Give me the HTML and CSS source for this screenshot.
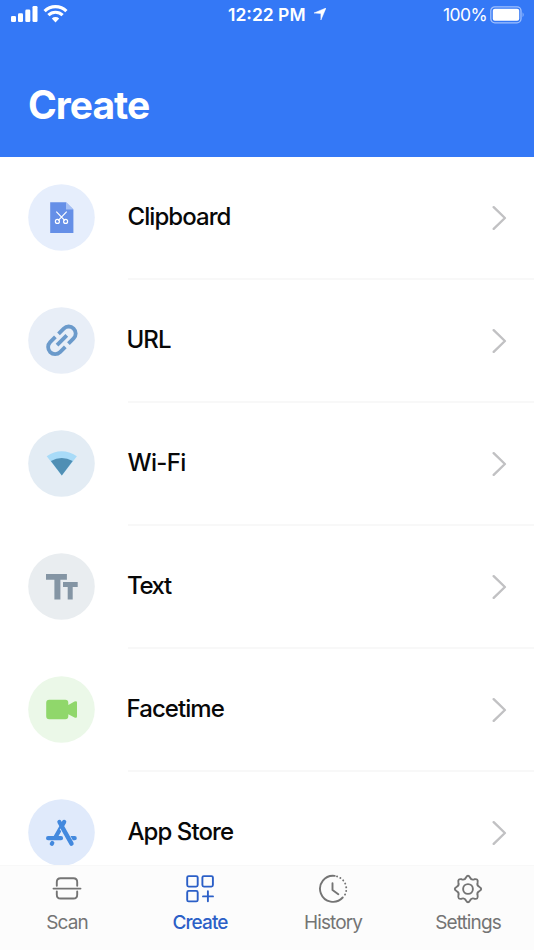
FILE: index.html
```html
<!DOCTYPE html>
<html lang="en">
<head>
<meta charset="utf-8">
<title>Create</title>
<link rel="stylesheet" href="styles.css">
</head>
<body>
<div class="app">
  <header class="header">
    <div class="status">
      <div class="status-left">
        <svg width="58" height="18" viewBox="0 0 58 18" fill="#fff">
          <rect x="0" y="11" width="5" height="6" rx="1.3"/><rect x="7" y="8.2" width="5" height="8.8" rx="1.3"/><rect x="14.3" y="4.6" width="5" height="12.4" rx="1.3"/><rect x="21.5" y="1" width="5" height="16" rx="1.3"/>
          <g fill="none" stroke="#fff" stroke-width="3.1"><path d="M33.6 6.2a15.2 15.2 0 0 1 21.8 0"/><path d="M37.4 10.2a10 10 0 0 1 14.2 0"/></g>
          <path d="M40.8 13.5a5.4 5.4 0 0 1 7.4 0L44.5 17.4z"/>
        </svg>
      </div>
      <div class="status-time">12:22 PM<svg width="12" height="12" viewBox="0 0 12 12"><path d="M12 0 6.9 12V5.5L0 5z" fill="#fff" stroke="#fff" stroke-width=".5"/></svg></div>
      <div class="status-right">100%<svg width="35" height="18" viewBox="0 0 35 18"><rect x=".8" y=".8" width="30.2" height="16" rx="4" fill="none" stroke="#a0c0fd" stroke-width="1.3"/><rect x="2.8" y="2.8" width="26.4" height="12" rx="2" fill="#fff"/><path d="M32.6 6.3q2 2.5 0 5z" fill="#a0c0fd"/></svg></div>
    </div>
    <h1 class="title">Create</h1>
  </header>

  <main class="list">
    <div class="row">
      <svg class="icon" viewBox="0 0 67 67"><circle cx="33.5" cy="33.5" r="33.3" fill="#e6eefc"/><path d="M22.2 18.2H38l7.4 7.4V49H22.2z" fill="#658fe7"/><path d="M38 18.2l7.4 7.4H38z" fill="#a5c0f5"/><g fill="none" stroke="#fff" stroke-width="1.2"><path d="M28.3 27.7l8.6 9M38.7 27.7l-8.6 9"/><circle cx="29.4" cy="37.4" r="2"/><circle cx="37.6" cy="37.4" r="2"/></g></svg>
      <div class="cell"><span class="label clip">Clipboard</span><svg class="chevron" viewBox="0 0 14 24"><path d="M1.2 1.2 12.4 12 1.2 22.8"/></svg></div>
    </div>
    <div class="row">
      <svg class="icon" viewBox="0 0 67 67"><circle cx="33.5" cy="33.5" r="33.3" fill="#e8eef7"/><g transform="translate(33.9 33.3) rotate(-45)" fill="none" stroke="#6b9acb" stroke-width="3.8"><path d="M-2.2-7H-9.6a7 7 0 0 0 0 14H-2.2M2.2-7H9.6a7 7 0 0 1 0 14H2.2M-6.9 0H6.9"/></g></svg>
      <div class="cell"><span class="label url">URL</span><svg class="chevron" viewBox="0 0 14 24"><path d="M1.2 1.2 12.4 12 1.2 22.8"/></svg></div>
    </div>
    <div class="row">
      <svg class="icon" viewBox="0 0 67 67"><circle cx="33.5" cy="33.5" r="33.3" fill="#e3ecf4"/><path d="M18.7 26.2q14.8-10 30.2 0L33.8 45.4z" fill="#a8dbf8"/><path d="M22.9 31.1q10.8-6 21.8 0L33.8 45.4z" fill="#508fb4"/></svg>
      <div class="cell"><span class="label wifi">Wi-Fi</span><svg class="chevron" viewBox="0 0 14 24"><path d="M1.2 1.2 12.4 12 1.2 22.8"/></svg></div>
    </div>
    <div class="row">
      <svg class="icon" viewBox="0 0 67 67"><circle cx="33.5" cy="33.5" r="33.3" fill="#e9edf0"/><path d="M18 21h20.9v5.7h-6.5v19.8h-6V26.7H18zM35 29.1h14.7v5h-5v12.4h-5V34.1H35z" fill="#8495a4"/></svg>
      <div class="cell"><span class="label text">Text</span><svg class="chevron" viewBox="0 0 14 24"><path d="M1.2 1.2 12.4 12 1.2 22.8"/></svg></div>
    </div>
    <div class="row">
      <svg class="icon" viewBox="0 0 67 67"><circle cx="33.5" cy="33.5" r="33.3" fill="#ebf8e8"/><path d="M21.2 23.7H37.3q3 0 3 3v2.2L46.5 25.6q2.5-1.2 2.5 1V40.5q0 2-2.5.9L40.3 38.3v2q0 3-3 3H21.2q-3 0-3-3V26.7q0-3 3-3z" fill="#90d76b"/></svg>
      <div class="cell"><span class="label face">Facetime</span><svg class="chevron" viewBox="0 0 14 24"><path d="M1.2 1.2 12.4 12 1.2 22.8"/></svg></div>
    </div>
    <div class="row">
      <svg class="icon" viewBox="0 0 67 67"><circle cx="33.5" cy="33.5" r="33.3" fill="#e0eafb"/><g fill="none" stroke="#4389de" stroke-width="4.2" stroke-linecap="round"><path d="M31.4 22.9 33.8 27.3M36.2 22.9 27.3 38.5M24.3 44l-.5.8"/><path d="M20.1 39.2H33M42.5 39.2h4.2"/></g><path d="M34.4 28.5 43.3 44.6" fill="none" stroke="#e0eafb" stroke-width="6"/><path d="M33.8 27.3 43.5 44.6" fill="none" stroke="#4389de" stroke-width="4.4" stroke-linecap="round"/></svg>
      <div class="cell"><span class="label app-store">App Store</span><svg class="chevron" viewBox="0 0 14 24"><path d="M1.2 1.2 12.4 12 1.2 22.8"/></svg></div>
    </div>
  </main>

  <nav class="tabs">
    <div class="tab"><svg width="30" height="30" viewBox="0 0 30 30"><path d="M4.8 11.8V8q0-3.8 3.8-3.8H21.4q3.8 0 3.8 3.8v3.8M4.8 17.4v3.3q0 3.8 3.8 3.8H21.4q3.8 0 3.8-3.8v-3.3M1.5 14.6h27"/></svg><span>Scan</span></div>
    <div class="tab active"><svg width="30" height="30" viewBox="0 0 30 30"><rect x="2.2" y="2.1" width="10.5" height="10.5" rx="1.5"/><rect x="17.4" y="2.1" width="10.5" height="10.5" rx="1.5"/><rect x="2.2" y="16.9" width="10.5" height="10.5" rx="1.5"/><path d="M18 22.4h10M22.9 17.3v10"/></svg><span>Create</span></div>
    <div class="tab"><svg width="30" height="30" viewBox="0 0 30 30"><path d="M16.7 1.9A13 13 0 1 0 24.7 23.5M14.5 9.2V16l5.8 4.2"/><path class="dots" d="M19 2.4A13 13 0 0 1 26.5 21.5"/></svg><span>History</span></div>
    <div class="tab"><svg width="30" height="30" viewBox="0 0 30 30"><path d="M13 3.5Q15 .1 17 3.5Q18.3 6.4 21.3 5.3Q25.4 4.4 24.6 8.5Q23.5 11.5 26.5 13Q29.9 15 26.5 17Q23.5 18.5 24.6 21.5Q25.4 25.6 21.3 24.7Q18.3 23.6 17 26.5Q15 29.9 13 26.5Q11.7 23.6 8.7 24.7Q4.6 25.6 5.4 21.5Q6.5 18.5 3.5 17Q.1 15 3.5 13Q6.5 11.5 5.4 8.5Q4.6 4.4 8.7 5.3Q11.7 6.4 13 3.5Z"/><circle cx="15" cy="15" r="4.9"/></svg><span>Settings</span></div>
  </nav>
</div>
</body>
</html>
```
FILE: styles.css
```css
* { box-sizing: border-box; }
body { margin: 0; background: #fff; font-family: Inter, "Liberation Sans", sans-serif; color: #080808; }
.app { height: 950px; display: flex; flex-direction: column; overflow: hidden; }
svg { display: block; flex: none; }

.header { height: 156.6px; flex: none; background: #3478f6; color: #fff; }
.status { height: 30px; padding: 0 9px 0 11px; display: grid; grid-template-columns: 217px auto 1fr; }
.status-left { padding-top: 5px; }
.status-time { display: flex; gap: 8px; line-height: 30px; font-size: 17.5px; font-weight: 600; }
.status-time svg { margin-top: 8px; }
.status-right { display: flex; justify-content: flex-end; gap: 3px; line-height: 30px; font-size: 17.5px; letter-spacing: -.6px; }
.status-right svg { margin-top: 6px; }
.title { margin: 50px 0 0 28px; font-size: 39px; line-height: 50px; font-weight: 700; letter-spacing: -1px; }

.list { flex: 1; min-height: 0; overflow: hidden; }
.row { height: 123px; padding-left: 28px; display: flex; gap: 32.5px; }
.icon { width: 67px; height: 67px; margin-top: 27.6px; }
.cell { flex: 1; display: flex; justify-content: space-between; padding: 27.4px 27.5px 0 0; border-bottom: 2px solid #f8f8f8; }
.label { height: 66px; line-height: 65px; font-size: 24px; font-weight: 500; letter-spacing: -.93px; }
.url, .face { margin-left: -1px; }
.wifi { letter-spacing: -.65px; }
.text { margin-left: -.5px; letter-spacing: -1.4px; }
.chevron { width: 15px; height: 24px; margin-top: 22px; fill: none; stroke: #c1c1c3; stroke-width: 2.4; stroke-linecap: round; stroke-linejoin: round; }

.tabs { height: 85px; flex: none; display: grid; grid-template-columns: 134px 132px 134px 136px; background: #fcfcfc; border-top: 1px solid #f8f8f8; color: #747474; }
.tab { display: flex; flex-direction: column; align-items: center; padding-top: 8px; font-size: 19px; line-height: 28px; letter-spacing: -.9px; }
.tab svg { fill: none; stroke: currentColor; stroke-width: 1.9; stroke-linecap: round; stroke-linejoin: round; }
.tab span { margin-top: 5px; }
.active { color: #2b5fc7; font-weight: 500; }
.tab .dots { stroke-dasharray: .1 3.6; }
```
